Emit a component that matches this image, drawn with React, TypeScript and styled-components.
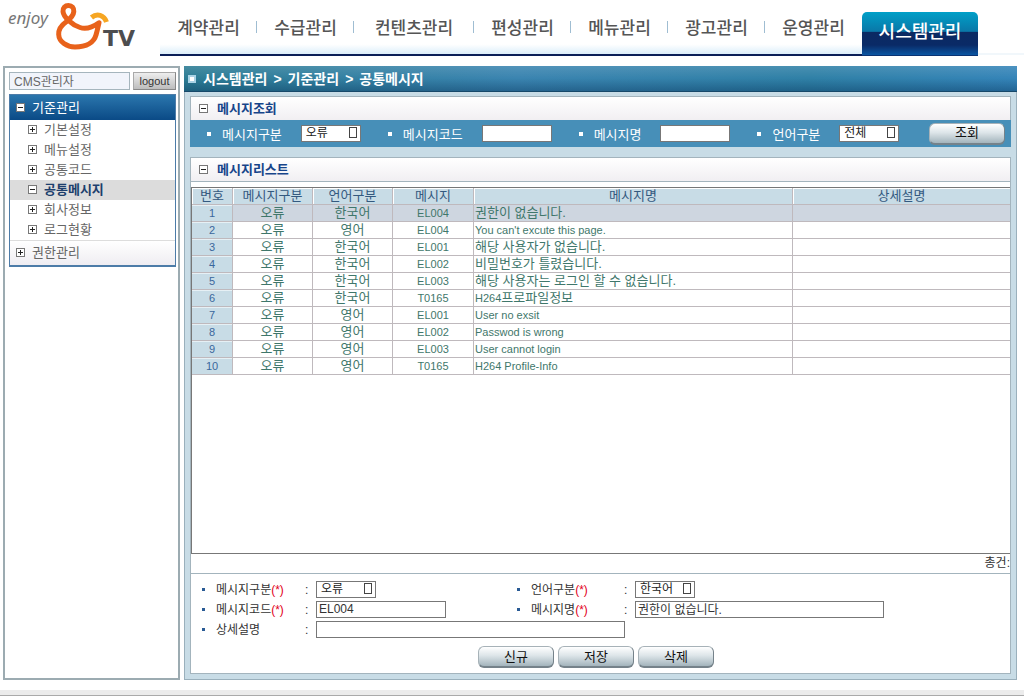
import React from "react";
import styled, { createGlobalStyle, css } from "styled-components";

const GlobalStyle = createGlobalStyle`
  *, *::before, *::after { box-sizing: border-box; }
  body {
    margin: 0;
    background: #fff;
    color: #333;
    font-family: "Liberation Sans", "Noto Sans CJK KR", sans-serif;
    font-size: 13px;
  }
  ul { list-style: none; margin: 0; padding: 0; }
  h1, h2 { margin: 0; }
  a { color: inherit; text-decoration: none; }
  input, select, button { font-family: inherit; margin: 0; }
`;

const Page = styled.div`
  display: flex;
  flex-direction: column;
  min-height: 100vh;
`;

/* ---------- header ---------- */

const Header = styled.header`
  display: flex;
  height: 56px;
  margin-bottom: 10px;
`;

const Logo = styled.a`
  flex: none;
  width: 160px;
  svg { display: block; }
`;

const Nav = styled.nav`
  display: flex;
  flex: none;
  background: linear-gradient(#fff 82%, #dceefa);
  border-bottom: 2px solid #0b1f57;
`;

const NavList = styled.ul`
  display: flex;
`;

const NavItem = styled.li<{ $wide?: boolean; $active?: boolean }>`
  display: flex;
  align-items: center;
  justify-content: center;
  width: ${(p) => (p.$wide ? 120 : 97)}px;
  height: 54px;
  padding-top: 4px;
  color: #555;
  font-size: 17px;
  font-weight: 500;
  line-height: 24px;
  background: linear-gradient(#9fbdd2, #9fbdd2) right 21px / 1px 12px no-repeat;
  ${(p) =>
    p.$active &&
    css`
      width: 116px;
      height: 44px;
      margin: 12px 0 -2px;
      padding: 0 0 4px;
      border-radius: 5px 5px 0 0;
      color: #fff;
      font-size: 18px;
      background: linear-gradient(#00a0c8, #0a78a8 44%, #0b2a63 46%, #0a2a66 75%, #0a54a0 97%, #0b1f57);
    `}
  &:nth-last-child(2) { background: none; }
`;

const HeaderTail = styled.div`
  flex: 1;
  height: 55px;
  border-bottom: 2px solid #f1f7fb;
`;

/* ---------- layout ---------- */

const Body = styled.div`
  display: flex;
  flex: 1;
  gap: 4px;
  padding: 0 7px 0 3px;
`;

const Sidebar = styled.aside`
  flex: none;
  width: 177px;
  padding: 4px 2px 4px 4px;
  border: 2px solid #9cabb1;
`;

const UserRow = styled.div`
  display: flex;
  align-items: center;
  gap: 3px;
  margin-bottom: 4px;
`;

const UserName = styled.input`
  flex: 1;
  min-width: 0;
  height: 18px;
  padding: 0 4px 2px;
  border: 1px solid #a5b5bd;
  background: #f1f4fb;
  color: #666;
  font-size: 12px;
`;

const LogoutButton = styled.button`
  width: 43px;
  height: 18px;
  padding: 0;
  border: 1px solid #a9a9a9;
  border-right-color: #888;
  border-bottom-color: #888;
  background: linear-gradient(#eee, #bdbdbd);
  color: #333;
  font-size: 11px;
`;

const Menu = styled.nav`
  border: 1px solid #4d7ca8;
  border-bottom-width: 2px;
`;

const MenuHeading = styled.a`
  display: flex;
  align-items: center;
  gap: 6px;
  height: 25px;
  padding-left: 6px;
  background: linear-gradient(#2b76ad, #0a4a86);
  color: #fff;
  line-height: 18px;
`;

const MenuItem = styled.a<{ $current?: boolean }>`
  display: flex;
  align-items: center;
  gap: 6px;
  height: 20px;
  padding-left: 18px;
  line-height: 18px;
  color: ${(p) => (p.$current ? "#1d3f6d" : "#666")};
  font-weight: ${(p) => (p.$current ? 700 : 400)};
  background: ${(p) => (p.$current ? "#dcdcdc" : "transparent")};
`;

const MenuFooter = styled(MenuHeading)`
  border-top: 1px solid #ddd;
  background: linear-gradient(#fff, #efedf2);
  color: #666;
`;

const Main = styled.main`
  display: flex;
  flex: 1;
  flex-direction: column;
  min-width: 0;
`;

const TitleBar = styled.div`
  display: flex;
  align-items: center;
  gap: 7px;
  height: 26px;
  padding-left: 4px;
  border-bottom: 1px solid #17496a;
  background: linear-gradient(rgba(255, 255, 255, 0.12), rgba(255, 255, 255, 0) 50%, rgba(0, 40, 80, 0.35)),
    linear-gradient(90deg, #2c7c94, #3a84b0 40%, #2f80a6 75%, #3484b8);
`;

const Square = styled.span`
  width: 8px;
  height: 8px;
  border: 2px solid #a9d3e6;
  background: #fff;
`;

const Crumbs = styled.h1`
  display: flex;
  gap: 6px;
  color: #fff;
  font-size: 14px;
  line-height: 20px;
`;

const Frame = styled.div`
  display: flex;
  flex: 1;
  flex-direction: column;
  padding: 4px 5px 5px;
  border: 1px solid #9ab0bc;
  border-top: 0;
  background: #c8dce6;
`;

const SectionTitle = styled.h2`
  display: flex;
  align-items: center;
  gap: 8px;
  height: 24px;
  padding-left: 8px;
  border: 1px solid #a3b4bd;
  border-bottom: 0;
  background: linear-gradient(#fff, #f1eff2);
  color: #17458a;
  font-size: 13px;
  line-height: 18px;
`;

const SearchBar = styled.form`
  display: flex;
  align-items: center;
  gap: 27px;
  height: 27px;
  margin-bottom: 10px;
  padding: 0 6px 0 17px;
  background: #478fb8;
  color: #fff;
`;

const SearchField = styled.label`
  display: flex;
  align-items: center;
  white-space: nowrap;
`;

const SearchName = styled.span`
  margin-right: 19px;
`;

const Bullet = styled.span<{ $tone?: string }>`
  flex: none;
  width: ${(p) => (p.$tone ? 3 : 4)}px;
  height: ${(p) => (p.$tone ? 3 : 4)}px;
  margin-right: 11px;
  background: ${(p) => p.$tone || "#fff"};
`;

const TextBox = styled.input<{ $width: number }>`
  width: ${(p) => p.$width}px;
  height: 17px;
  padding: 0 2px 2px;
  border: 1px solid #777;
  border-radius: 0;
  background: #fff;
  color: #333;
  font-size: 12px;
`;

const SelectWrap = styled.span`
  position: relative;
  display: inline-flex;
  &::after {
    content: "";
    position: absolute;
    top: 2px;
    right: 4px;
    width: 8px;
    height: 11px;
    border: 1px solid #444;
    pointer-events: none;
  }
`;

const SelectBox = styled.select`
  appearance: none;
  width: 60px;
  height: 17px;
  padding: 0 4px;
  border: 1px solid #777;
  border-radius: 0;
  background: #fff;
  color: #222;
  font-size: 12px;
  line-height: 15px;
`;

const PushButton = styled.button`
  width: 76px;
  height: 22px;
  padding: 0;
  border: 1px solid #75828a;
  border-top-color: #a7b2b8;
  border-left-color: #a7b2b8;
  border-bottom-width: 2px;
  border-radius: 6px;
  background: linear-gradient(#fff, #dde5e9 45%, #a3b4bc);
  color: #111;
  font-size: 13px;
  line-height: 18px;
`;

const SearchButton = styled(PushButton)`
  margin-left: auto;
`;

/* ---------- list ---------- */

const ListPanel = styled.section`
  display: flex;
  flex: 1;
  flex-direction: column;
  border: 1px solid #a3b4bd;
  border-top: 0;
  background: #fff;
`;

const ListTitle = styled(SectionTitle)`
  margin: 0 -1px 5px;
  height: 25px;
  border-bottom: 1px solid #a3b4bd;
`;

const GridArea = styled.div`
  flex: 1;
  overflow: hidden;
  border: 1px solid #777;
  border-right: 0;
`;

const Grid = styled.table`
  width: 100%;
  table-layout: fixed;
  border-collapse: separate;
  border-spacing: 0;
  th, td {
    height: 17px;
    padding: 0 1px;
    border-right: 1px solid #bfb9bd;
    border-bottom: 1px solid #bfb9bd;
    line-height: 16px;
    white-space: nowrap;
    overflow: hidden;
  }
  th { font-weight: 400; }
  th:last-child, td:last-child { border-right: 0; }
  thead th {
    background: #c8dce6;
    color: #34597f;
    box-shadow: inset 1px 1px #fff;
  }
  tbody th {
    background: #c8dce6;
    color: #3a679c;
    font-size: 11px;
    box-shadow: inset 0 1px #e6f0f5;
  }
`;

const Row = styled.tr<{ $selected?: boolean }>`
  background: ${(p) => (p.$selected ? "#ced6e0" : "#fff")};
`;

const Cell = styled.td<{ $center?: boolean }>`
  color: #3f776b;
  text-align: ${(p) => (p.$center ? "center" : "left")};
`;

const Latin = styled.span`
  font-size: 11px;
`;

const Total = styled.div`
  height: 20px;
  overflow: hidden;
  color: #333;
  font-size: 12px;
  line-height: 18px;
  text-align: right;
  border-bottom: 1px solid #a3b4bd;
`;

/* ---------- edit form ---------- */

const EditForm = styled.form`
  padding: 7px 8px 5px 11px;
`;

const FieldGrid = styled.div`
  display: grid;
  grid-template-columns: 315px 1fr;
  row-gap: 3px;
  margin-bottom: 8px;
`;

const FormField = styled.label<{ $full?: boolean }>`
  display: flex;
  align-items: center;
  height: 17px;
  font-size: 12px;
  line-height: 16px;
  ${(p) => p.$full && css`grid-column: 1 / -1;`}
`;

const FormName = styled.span<{ $wide?: boolean }>`
  width: ${(p) => (p.$wide ? 93 : 89)}px;
  color: #333;
`;

const Required = styled.span`
  color: #e2001a;
`;

const Colon = styled.span`
  width: 11px;
`;

const Actions = styled.div`
  display: flex;
  justify-content: center;
  gap: 4px;
  padding-right: 12px;
`;

const Footer = styled.footer`
  height: 6px;
  margin-top: 10px;
  border-bottom: 1px solid #aaa;
  background: #ececec;
`;

/* ---------- drawings ---------- */

function LogoMark() {
  return (
    <svg width="160" height="56" viewBox="0 0 160 56" role="img" aria-label="enjoy &TV">
      <text x="8" y="24" fontFamily="Noto Sans, sans-serif" fontStyle="italic" fontSize="17" fill="#777">
        enjoy
      </text>
      <path
        d="M99 22.700C93 27 86 29.500 80 27.500C72 25 63.500 17 63 11.500C62.600 8 65 5.500 68.500 5.500C72 5.500 74 8 73.800 11.500C73.500 16 70 19 66 22C61 25.500 58.500 30 58.700 34.500C59 42 67 47 75 47C87 47 94 42 96 35C97.500 30 98 27 99 22.700Z"
        fill="none"
        stroke="#e8621b"
        strokeWidth="5"
        strokeLinejoin="round"
      />
      <path d="M91.500 17.500C97 13 104 15 106.500 22" fill="none" stroke="#f6a623" strokeWidth="5" />
      <text x="103" y="46" fontFamily="DejaVu Sans, sans-serif" fontWeight="700" fontSize="22" fill="#4d4d4f">
        TV
      </text>
    </svg>
  );
}

function Toggle({ open }: { open?: boolean }) {
  return (
    <svg width="10" height="10" viewBox="0 0 10 10" aria-hidden="true">
      <rect x="0.5" y="0.5" width="8" height="8" fill="#fff" stroke="#777" />
      <path d={open ? "M2 4.500H7" : "M2 4.500H7M4.500 2V7"} stroke="#222" />
    </svg>
  );
}

/* ---------- pieces ---------- */

function Select({ options }: { options: string[] }) {
  return (
    <SelectWrap>
      <SelectBox defaultValue={options[0]}>
        {options.map((o) => (
          <option key={o}>{o}</option>
        ))}
      </SelectBox>
    </SelectWrap>
  );
}

function Search({ name, children }: { name: string; children: React.ReactNode }) {
  return (
    <SearchField>
      <Bullet />
      <SearchName>{name}</SearchName>
      {children}
    </SearchField>
  );
}

type FieldProps = { name: string; required?: boolean; wide?: boolean; full?: boolean; children: React.ReactNode };

function Field({ name, required, wide, full, children }: FieldProps) {
  return (
    <FormField $full={full}>
      <Bullet $tone="#2a5b95" />
      <FormName $wide={wide}>
        {name}
        {required && <Required>(*)</Required>}
      </FormName>
      <Colon>:</Colon>
      {children}
    </FormField>
  );
}

/* Latin runs are set smaller than the Hangul beside them. */
function Mixed({ text }: { text: string }) {
  const [, latin, rest] = text.match(/^([\x20-\x7e]*)(.*)$/) as RegExpMatchArray;
  return (
    <>
      {latin && <Latin>{latin}</Latin>}
      {rest}
    </>
  );
}

const navItems = ["계약관리", "수급관리", "컨텐츠관리", "편성관리", "메뉴관리", "광고관리", "운영관리", "시스템관리"];
const menuItems = ["기본설정", "메뉴설정", "공통코드", "공통메시지", "회사정보", "로그현황"];
const columns: [string, number?][] = [
  ["번호", 41],
  ["메시지구분", 80],
  ["언어구분", 80],
  ["메시지", 81],
  ["메시지명", 319],
  ["상세설명"],
];
const messages = [
  ["한국어", "EL004", "권한이 없습니다."],
  ["영어", "EL004", "You can't excute this page."],
  ["한국어", "EL001", "해당 사용자가 없습니다."],
  ["한국어", "EL002", "비밀번호가 틀렸습니다."],
  ["한국어", "EL003", "해당 사용자는 로그인 할 수 없습니다."],
  ["한국어", "T0165", "H264프로파일정보"],
  ["영어", "EL001", "User no exsit"],
  ["영어", "EL002", "Passwod is wrong"],
  ["영어", "EL003", "User cannot login"],
  ["영어", "T0165", "H264 Profile-Info"],
];

export default function App() {
  return (
    <Page>
      <GlobalStyle />
      <Header>
        <Logo href="#">
          <LogoMark />
        </Logo>
        <Nav>
          <NavList>
            {navItems.map((n, i) => (
              <NavItem key={n} $wide={n === "컨텐츠관리"} $active={i === navItems.length - 1}>
                <a href="#">{n}</a>
              </NavItem>
            ))}
          </NavList>
        </Nav>
        <HeaderTail />
      </Header>

      <Body>
        <Sidebar>
          <UserRow>
            <UserName aria-label="사용자" defaultValue="CMS관리자" readOnly />
            <LogoutButton type="button">logout</LogoutButton>
          </UserRow>
          <Menu>
            <MenuHeading href="#">
              <Toggle open />
              기준관리
            </MenuHeading>
            <ul>
              {menuItems.map((m) => {
                const current = m === "공통메시지";
                return (
                  <li key={m}>
                    <MenuItem href="#" $current={current}>
                      <Toggle open={current} />
                      {m}
                    </MenuItem>
                  </li>
                );
              })}
            </ul>
            <MenuFooter href="#">
              <Toggle />
              권한관리
            </MenuFooter>
          </Menu>
        </Sidebar>

        <Main>
          <TitleBar>
            <Square />
            <Crumbs>
              <span>시스템관리</span>
              <span>&gt;</span>
              <span>기준관리</span>
              <span>&gt;</span>
              <span>공통메시지</span>
            </Crumbs>
          </TitleBar>
          <Frame>
            <SectionTitle>
              <Toggle open />
              메시지조회
            </SectionTitle>
            <SearchBar onSubmit={(e) => e.preventDefault()}>
              <Search name="메시지구분">
                <Select options={["오류"]} />
              </Search>
              <Search name="메시지코드">
                <TextBox $width={70} />
              </Search>
              <Search name="메시지명">
                <TextBox $width={70} />
              </Search>
              <Search name="언어구분">
                <Select options={["전체", "한국어", "영어"]} />
              </Search>
              <SearchButton>조회</SearchButton>
            </SearchBar>

            <ListPanel>
              <ListTitle>
                <Toggle open />
                메시지리스트
              </ListTitle>
              <GridArea>
                <Grid>
                  <colgroup>
                    {columns.map(([name, width]) => (
                      <col key={name} width={width} />
                    ))}
                  </colgroup>
                  <thead>
                    <tr>
                      {columns.map(([name]) => (
                        <th key={name} scope="col">
                          {name}
                        </th>
                      ))}
                    </tr>
                  </thead>
                  <tbody>
                    {messages.map(([lang, code, text], i) => (
                      <Row key={i} $selected={i === 0}>
                        <th scope="row">{i + 1}</th>
                        <Cell $center>오류</Cell>
                        <Cell $center>{lang}</Cell>
                        <Cell $center>
                          <Latin>{code}</Latin>
                        </Cell>
                        <Cell>
                          <Mixed text={text} />
                        </Cell>
                        <Cell />
                      </Row>
                    ))}
                  </tbody>
                </Grid>
              </GridArea>
              <Total>총건:</Total>

              <EditForm onSubmit={(e) => e.preventDefault()}>
                <FieldGrid>
                  <Field name="메시지구분" required>
                    <Select options={["오류"]} />
                  </Field>
                  <Field name="언어구분" required wide>
                    <Select options={["한국어", "영어"]} />
                  </Field>
                  <Field name="메시지코드" required>
                    <TextBox $width={130} defaultValue="EL004" />
                  </Field>
                  <Field name="메시지명" required wide>
                    <TextBox $width={249} defaultValue="권한이 없습니다." />
                  </Field>
                  <Field name="상세설명" full>
                    <TextBox $width={309} />
                  </Field>
                </FieldGrid>
                <Actions>
                  <PushButton type="button">신규</PushButton>
                  <PushButton>저장</PushButton>
                  <PushButton type="button">삭제</PushButton>
                </Actions>
              </EditForm>
            </ListPanel>
          </Frame>
        </Main>
      </Body>
      <Footer />
    </Page>
  );
}
